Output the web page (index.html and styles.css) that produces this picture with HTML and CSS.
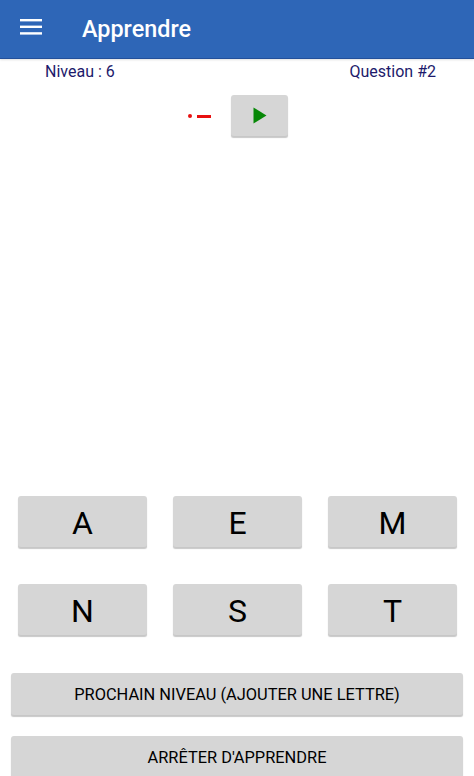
FILE: index.html
```html
<!DOCTYPE html>
<html>
<head>
    <title>Apprendre</title>
    <link rel="stylesheet" href="styles.css">
</head>
<body>
    <header class="appBar">
        <svg class="menuIcon" width="22" height="16" viewBox="0 0 22 16">
            <rect x="0" y="0" width="22" height="2.4" fill="#fff"/>
            <rect x="0" y="6.6" width="22" height="2.4" fill="#fff"/>
            <rect x="0" y="13.2" width="22" height="2.4" fill="#fff"/>
        </svg>
        <h1 class="appTitle">Apprendre</h1>
    </header>

    <div class="status">
        <span>Niveau : 6</span>
        <span>Question #2</span>
    </div>

    <div class="morse">
        <div class="morseCode">
            <span class="dot"></span>
            <span class="dash"></span>
        </div>
        <button type="button" class="btn playBtn">
            <svg width="14" height="17" viewBox="0 0 14 17">
                <path d="M0.5 0.5 L13.5 8.5 L0.5 16.5 Z" fill="#078807"/>
            </svg>
        </button>
    </div>

    <div class="letters">
        <button type="button" class="btn letterBtn">A</button>
        <button type="button" class="btn letterBtn">E</button>
        <button type="button" class="btn letterBtn">M</button>
        <button type="button" class="btn letterBtn">N</button>
        <button type="button" class="btn letterBtn">S</button>
        <button type="button" class="btn letterBtn">T</button>
    </div>

    <div class="actions">
        <button type="button" class="btn actionBtn">PROCHAIN NIVEAU (AJOUTER UNE LETTRE)</button>
        <button type="button" class="btn actionBtn">ARRÊTER D'APPRENDRE</button>
    </div>
</body>
</html>
```

FILE: styles.css
```css
html, body {
    height: 776px;
    overflow: hidden;
}

body {
    margin: 0;
    background: #fff;
    font-family: Roboto, "Liberation Sans", sans-serif;
}

.appBar {
    display: flex;
    align-items: center;
    height: 58px;
    padding-left: 20px;
    background: #2e66b7;
    border-bottom: 1px solid #23509a;
    box-shadow: 0 1px 2px rgba(0, 0, 0, 0.12);
}

.menuIcon {
    margin-top: -4px;
}

.appTitle {
    margin: 0 0 0 40px;
    color: #fff;
    font-size: 23.4px;
    font-weight: 500;
}

.status {
    display: flex;
    justify-content: space-between;
    padding: 4px 38px 0 45px;
    color: #1d1a6b;
    font-size: 16px;
    line-height: 18px;
}

.btn {
    display: block;
    padding: 0;
    border: none;
    border-radius: 3px;
    background: #d6d6d6;
    box-shadow: 0 2px 1px -0.5px rgba(0, 0, 0, 0.22);
    color: #000;
    font-family: inherit;
}

.morse {
    display: flex;
    align-items: center;
    margin-top: 14px;
    padding-left: 188px;
}

.morseCode {
    display: flex;
    align-items: center;
    gap: 5px;
    width: 43px;
    margin-top: 1px;
}

.dot {
    width: 4px;
    height: 4px;
    border-radius: 50%;
    background: #e81010;
}

.dash {
    width: 14px;
    height: 3px;
    background: #e81010;
}

.playBtn {
    display: flex;
    align-items: center;
    justify-content: center;
    width: 57px;
    height: 41px;
}

.letters {
    display: grid;
    grid-template-columns: repeat(3, 129px);
    grid-auto-rows: 51px;
    column-gap: 26px;
    row-gap: 37px;
    margin-top: 360px;
    padding-left: 18px;
}

.letterBtn {
    padding-top: 2px;
    font-size: 32px;
    font-weight: 400;
}

.actions {
    display: flex;
    flex-direction: column;
    gap: 21px;
    margin-top: 38px;
    padding: 0 11px;
}

.actionBtn {
    width: 452px;
    height: 42px;
    font-size: 16.4px;
    font-weight: 400;
}
```
